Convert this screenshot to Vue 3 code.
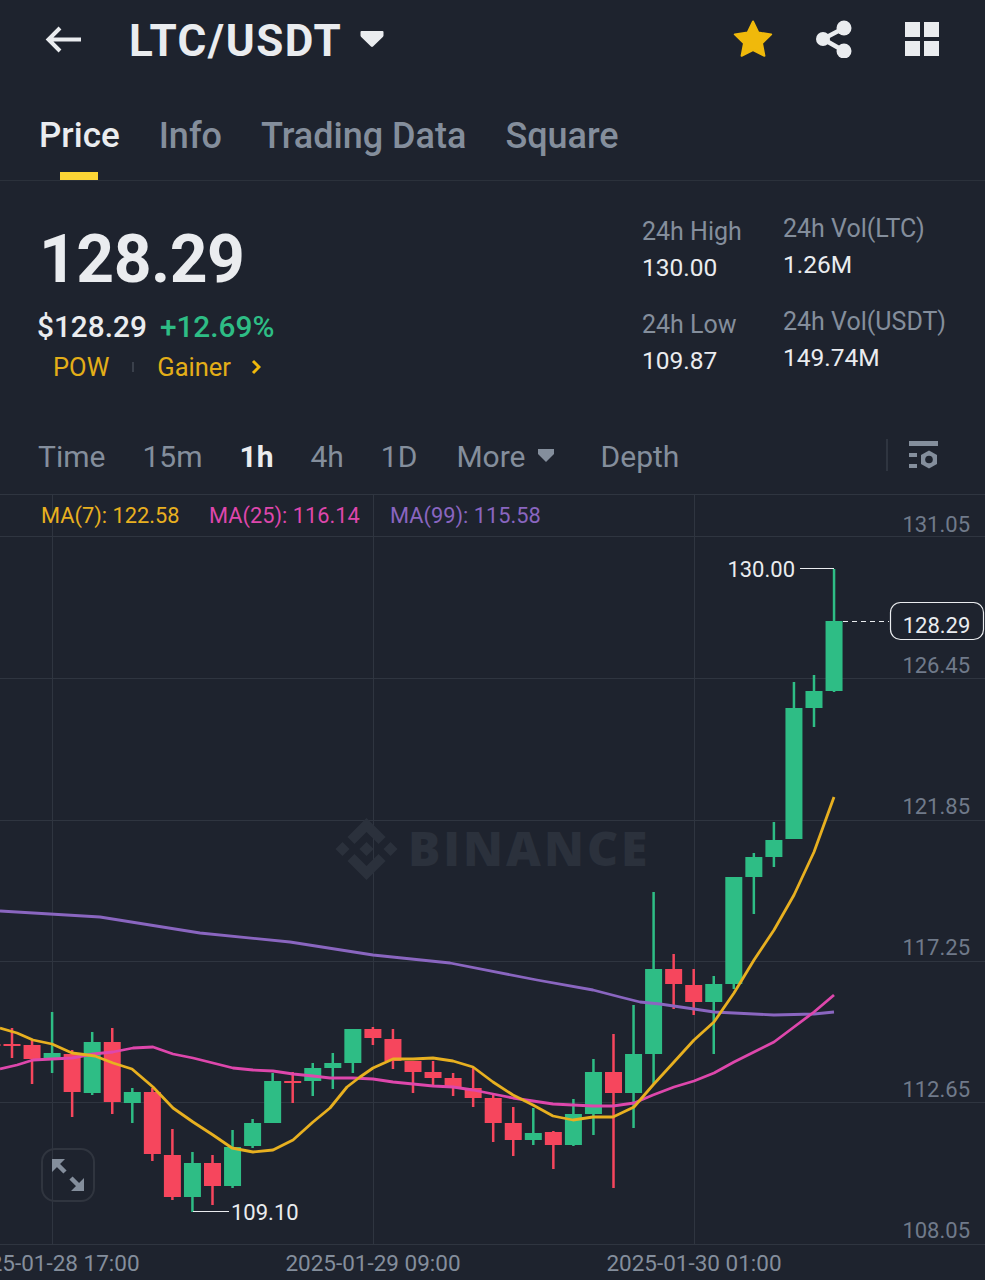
<script setup>
const tabs = [
  { label: 'Price', active: true },
  { label: 'Info' },
  { label: 'Trading Data' },
  { label: 'Square' },
]
const stats = [
  [{ k: '24h High', v: '130.00' }, { k: '24h Low', v: '109.87' }],
  [{ k: '24h Vol(LTC)', v: '1.26M' }, { k: '24h Vol(USDT)', v: '149.74M' }],
]
const intervals = [
  { label: 'Time' }, { label: '15m' }, { label: '1h', active: true }, { label: '4h' }, { label: '1D' },
]
const G = '#2EBD85'
const R = '#F6465D'
// i, bodyTop, bodyBottom, wickTop, wickBottom, colour
const raw = [
  [-1, 1044, 1046, 1044, 1046, R],
  [0, 1044, 1046, 1028, 1058, R],
  [1, 1045, 1059, 1039, 1084, R],
  [2, 1053, 1059, 1012, 1073, G],
  [3, 1054, 1092, 1050, 1117, R],
  [4, 1042, 1093, 1032, 1095, G],
  [5, 1042, 1102, 1028, 1114, R],
  [6, 1092, 1103, 1088, 1123, G],
  [7, 1092, 1154, 1088, 1161, R],
  [8, 1155, 1197, 1129, 1200, R],
  [9, 1163, 1197, 1152, 1212, G],
  [10, 1163, 1186, 1155, 1205, R],
  [11, 1147, 1186, 1130, 1188, G],
  [12, 1123, 1146, 1119, 1148, G],
  [13, 1081, 1123, 1073, 1123, G],
  [14, 1081, 1083, 1072, 1103, R],
  [15, 1068, 1081, 1063, 1096, G],
  [16, 1063, 1068, 1053, 1089, G],
  [17, 1029, 1063, 1029, 1073, G],
  [18, 1029, 1038, 1027, 1045, R],
  [19, 1039, 1061, 1029, 1069, R],
  [20, 1061, 1072, 1061, 1093, R],
  [21, 1072, 1078, 1061, 1086, R],
  [22, 1078, 1088, 1073, 1096, R],
  [23, 1088, 1098, 1068, 1107, R],
  [24, 1098, 1123, 1094, 1142, R],
  [25, 1123, 1140, 1107, 1156, R],
  [26, 1133, 1140, 1108, 1145, G],
  [27, 1132, 1145, 1131, 1169, R],
  [28, 1114, 1145, 1099, 1146, G],
  [29, 1072, 1114, 1059, 1135, G],
  [30, 1072, 1093, 1034, 1188, R],
  [31, 1054, 1093, 1005, 1128, G],
  [32, 969, 1054, 892, 1085, G],
  [33, 969, 984, 954, 1009, R],
  [34, 985, 1002, 969, 1015, R],
  [35, 984, 1002, 976, 1054, G],
  [36, 877, 984, 877, 989, G],
  [37, 857, 877, 853, 914, G],
  [38, 840, 857, 822, 867, G],
  [39, 708, 839, 682, 839, G],
  [40, 691, 708, 675, 727, G],
  [41, 621, 691, 569, 692, G],
]
const candles = raw.map(([i, top, bottom, wt, wb, color]) => ({
  x: 12 + i * 20.05, top, bottom, wt, wb, color,
}))
const ma7 = '0,1028 17,1033 33,1040 52,1044 72,1053 80,1054 95,1056 113,1063 132,1069 153,1087 173,1108 193,1122 213,1135 232,1148 253,1152 273,1150 293,1140 313,1122 330,1108 347,1087 360,1077 373,1068 393,1059 413,1059 433,1058 453,1061 473,1067 493,1082 513,1095 533,1105 553,1116 573,1120 593,1117 613,1117 634,1107 653,1085 674,1062 694,1040 714,1022 734,993 754,960 774,930 794,895 814,852 834,797'
const ma25 = '0,1069 17,1065 33,1060 52,1059 72,1058 93,1054 113,1052 133,1048 153,1047 173,1054 193,1058 213,1063 233,1068 253,1070 273,1071 293,1074 313,1076 330,1078 353,1078 373,1079 393,1082 413,1084 433,1086 453,1087 473,1090 493,1094 513,1098 533,1101 553,1104 573,1105 593,1106 613,1106 634,1103 653,1095 674,1087 694,1081 714,1073 734,1062 754,1052 774,1042 794,1027 814,1012 834,995'
const ma99 = '0,911 50,914 100,917 150,925 200,933 290,942 373,955 450,963 537,980 593,990 620,997 640,1002 660,1004 694,1009 714,1012 734,1013 774,1015 794,1014.5 814,1014 834,1012'
const hLines = [536, 678, 820, 961, 1102, 1244]
const vLines = [52, 373, 694]
const prices = [
  { t: '131.05', y: 532 }, { t: '126.45', y: 673 }, { t: '121.85', y: 814 },
  { t: '117.25', y: 955 }, { t: '112.65', y: 1097 }, { t: '108.05', y: 1238 },
]
const dates = [
  { t: '2025-01-28 17:00', x: 52 }, { t: '2025-01-29 09:00', x: 373 }, { t: '2025-01-30 01:00', x: 694 },
]
const legend = [
  { t: 'MA(7): 122.58', x: 41, c: 'l-y' },
  { t: 'MA(25): 116.14', x: 209, c: 'l-p' },
  { t: 'MA(99): 115.58', x: 390, c: 'l-v' },
]
</script>

<template>
  <div class="page">
    <header class="head">
      <svg class="back" width="38" height="30" viewBox="0 0 38 30">
        <path d="M36 14.5H4M15 3 3.5 14.5 15 26" fill="none" stroke="#EAECEF" stroke-width="4" />
      </svg>
      <h1 class="pair">LTC/USDT</h1>
      <svg class="caret" width="24" height="18" viewBox="0 0 24 18">
        <path d="M1.5 1h21a1 1 0 0 1 1 1v3.5a2 2 0 0 1-.7 1.4L13 16.6a1.5 1.5 0 0 1-2 0L1.2 6.9a2 2 0 0 1-.7-1.4V2a1 1 0 0 1 1-1z" fill="#EAECEF" />
      </svg>
      <div class="spacer"></div>
      <svg class="star" width="40" height="38" viewBox="0 0 40 38">
        <path d="M20 1.5 25.4 12.6 38.2 14.4 29 23.2 31.4 35.8 20 30 8.6 35.8 11 23.2 1.8 14.4 14.6 12.6Z" fill="#F0B90B" stroke="#F0B90B" stroke-width="2" stroke-linejoin="round" />
      </svg>
      <svg class="share" width="38" height="38" viewBox="0 0 38 38">
        <path d="M29 8 8 19 29 31" fill="none" stroke="#EAECEF" stroke-width="4.5" />
        <circle cx="29" cy="8" r="7.5" fill="#EAECEF" />
        <circle cx="8" cy="19" r="7" fill="#EAECEF" />
        <circle cx="29" cy="31" r="7.5" fill="#EAECEF" />
      </svg>
      <svg class="grid" width="34" height="34" viewBox="0 0 34 34">
        <rect x="0" y="0" width="15" height="15" fill="#EAECEF" />
        <rect x="19" y="0" width="15" height="15" fill="#EAECEF" />
        <rect x="0" y="19" width="15" height="15" fill="#EAECEF" />
        <rect x="19" y="19" width="15" height="15" fill="#EAECEF" />
      </svg>
    </header>

    <nav class="tabs">
      <div v-for="t in tabs" :key="t.label" class="tab" :class="{ on: t.active }">{{ t.label }}</div>
    </nav>

    <section class="summary">
      <div class="left">
        <div class="last">128.29</div>
        <div class="sub"><span class="usd">$128.29</span><span class="pct">+12.69%</span></div>
        <div class="tags">
          <span>POW</span><i class="sep"></i><span>Gainer</span>
          <svg class="chev" width="10" height="16" viewBox="0 0 10 16">
            <path d="M2 2l6 6-6 6" fill="none" stroke="#F0B90B" stroke-width="3" />
          </svg>
        </div>
      </div>
      <div class="stats">
        <div v-for="(col, ci) in stats" :key="ci" class="col" :class="'col' + ci">
          <div v-for="s in col" :key="s.k" class="stat">
            <div class="k">{{ s.k }}</div>
            <div class="v">{{ s.v }}</div>
          </div>
        </div>
      </div>
    </section>

    <nav class="bar">
      <div v-for="i in intervals" :key="i.label" class="iv" :class="{ on: i.active }">{{ i.label }}</div>
      <div class="iv more">
        More
        <svg width="16" height="13" viewBox="0 0 16 13">
          <path d="M0 0h16v5l-8 8-8-8z" fill="#848E9C" />
        </svg>
      </div>
      <div class="iv depth">Depth</div>
      <div class="spacer"></div>
      <i class="vsep"></i>
      <svg class="cfg" width="30" height="28" viewBox="0 0 30 28">
        <rect x="0" y="0" width="29" height="5" fill="#848E9C" />
        <rect x="0" y="12" width="8" height="4" fill="#848E9C" />
        <rect x="0" y="23" width="8" height="4" fill="#848E9C" />
        <path d="M20 10.5 28 15v9l-8 4.5-8-4.5v-9z" transform="translate(0 -1)" fill="#848E9C" />
        <circle cx="20" cy="18.5" r="3.8" fill="#1E232E" />
      </svg>
    </nav>

    <div class="chart">
      <svg class="plot" width="985" height="786" viewBox="0 494 985 786">
        <line x1="0" x2="985" y1="494.5" y2="494.5" class="gl" />
        <line v-for="y in hLines" :key="y" x1="0" x2="985" :y1="y + 0.5" :y2="y + 0.5" class="gl" />
        <line v-for="x in vLines" :key="x" :x1="x + 0.5" :x2="x + 0.5" y1="494" y2="1244" class="gl" />

        <path transform="translate(335.5 818) scale(0.49)" class="wm" d="M38.73 53.2l24.59-24.58 24.6 24.6 14.3-14.31L63.32 0 24.42 38.9l14.31 14.3zM0 63.31l14.3-14.31 14.31 14.31-14.31 14.3zM38.73 73.41l24.59 24.59 24.6-24.6 14.31 14.29-38.9 38.91-38.91-38.88v-.03l14.31-14.28zM98.01 63.31l14.3-14.31 14.3 14.3-14.3 14.32zM77.83 63.3L63.32 48.78 52.59 59.51l-1.24 1.23-2.54 2.54 14.51 14.5 14.51-14.52v-.01z" />
        <text x="408" y="866" class="wmt">BINANCE</text>

        <text v-for="l in legend" :key="l.t" :x="l.x" y="523" class="lg" :class="l.c">{{ l.t }}</text>

        <g v-for="(c, n) in candles" :key="n">
          <rect :x="c.x - 1.25" :y="c.wt" width="2.5" :height="c.wb - c.wt" :fill="c.color" />
          <rect :x="c.x - 8.5" :y="c.top" width="17" :height="c.bottom - c.top" :fill="c.color" />
        </g>

        <polyline :points="ma99" class="ln" stroke="#8A66C0" />
        <polyline :points="ma25" class="ln" stroke="#DE47AC" />
        <polyline :points="ma7" class="ln" stroke="#E8B020" />

        <path d="M800 568.5h34M193 1211.5h36" class="mk" />
        <text x="795" y="577" text-anchor="end" class="hl">130.00</text>
        <text x="231" y="1220" class="hl">109.10</text>

        <line x1="843" x2="889" y1="621.5" y2="621.5" class="dash" />
        <rect x="890.5" y="602.5" width="93" height="37" rx="10" class="tagbox" />
        <text x="936.5" y="633" text-anchor="middle" class="hl">128.29</text>

        <text v-for="p in prices" :key="p.t" x="970" :y="p.y" text-anchor="end" class="ax">{{ p.t }}</text>
        <text v-for="d in dates" :key="d.t" :x="d.x" y="1271" text-anchor="middle" class="ax dt">{{ d.t }}</text>
      </svg>
      <button class="expand">
        <svg width="34" height="34" viewBox="0 0 34 34">
          <path d="M1 1h13L1 14zM33 33H20l13-13z" fill="#848E9C" />
          <path d="M5 5l9 9M20 20l9 9" stroke="#848E9C" stroke-width="4.5" fill="none" />
        </svg>
      </button>
    </div>
  </div>
</template>

<style scoped>
.page {
  width: 985px;
  height: 1280px;
  overflow: hidden;
  background: #1E232E;
  color: #EAECEF;
  font-family: Roboto, "Liberation Sans", sans-serif;
}
.head {
  display: flex;
  align-items: center;
  height: 80px;
  padding: 0 46px 0 45px;
  box-sizing: border-box;
}
.back { margin-top: 0; }
.pair {
  margin: 3px 0 0 46px;
  font-size: 44px;
  font-weight: 700;
  line-height: 77px;
  letter-spacing: 1.5px;
}
.caret { margin: -2px 0 0 18px; }
.spacer { flex: 1; }
.star { margin-top: -3px; }
.share { margin: -3px 0 0 42px; }
.grid { margin: -3px 0 0 52px; }

.tabs {
  display: flex;
  gap: 39px;
  height: 101px;
  padding: 21px 0 0 39px;
  box-sizing: border-box;
  border-bottom: 1px solid #2B313B;
}
.tab {
  position: relative;
  font-size: 36px;
  line-height: 70px;
  color: #848E9C;
  font-weight: 500;
}
.tab.on { color: #EAECEF; font-size: 35px; }
.tab.on::after {
  content: "";
  position: absolute;
  left: 21px;
  bottom: 0;
  width: 38px;
  height: 8px;
  background: #FCD535;
}

.summary {
  display: flex;
  justify-content: space-between;
  height: 250px;
  box-sizing: border-box;
}
.left { padding: 38px 0 0 37px; }
.last {
  font-size: 66px;
  line-height: 80px;
  font-weight: 700;
  margin: 1px 0 0 2px;
  letter-spacing: -0.5px;
}
.sub {
  display: flex;
  gap: 13px;
  margin-top: 9px;
  font-size: 29.8px;
  line-height: 36px;
  font-weight: 500;
}
.pct { color: #2EBD85; }
.tags {
  display: flex;
  align-items: center;
  margin: 5px 0 0 16px;
  font-size: 25.5px;
  line-height: 34px;
  color: #E3AE18;
}
.sep {
  width: 2px;
  height: 10px;
  margin: 0 23px;
  background: #3A404B;
}
.chev { margin-left: 20px; }

.stats {
  display: flex;
  gap: 41px;
  padding-right: 39px;
}
.col0 { width: 100px; padding-top: 33px; }
.col1 { width: 163px; padding-top: 30px; }
.stat { height: 93px; white-space: nowrap; }
.k {
  font-size: 25px;
  line-height: 36px;
  color: #848E9C;
}
.v {
  font-size: 24.5px;
  line-height: 36px;
  color: #EAECEF;
}

.bar {
  display: flex;
  align-items: center;
  gap: 37px;
  height: 63px;
  padding: 0 46px 12px 38px;
  box-sizing: border-box;
}
.iv {
  font-size: 30px;
  line-height: 52px;
  color: #848E9C;
}
.iv.on { color: #EAECEF; font-weight: 700; }
.more { display: flex; gap: 12px; margin-left: 2px; }
.more svg { margin-top: 18px; }
.depth { margin-left: 10px; }
.vsep {
  width: 2px;
  height: 32px;
  margin: -4px -16px 0 0;
  background: #2F3540;
}
.cfg { display: block; margin-top: -4px; }

.chart {
  position: relative;
  height: 786px;
}
.plot { display: block; }
.gl { stroke: #2F3540; stroke-width: 1; }
.wm { fill: #2B313C; }
.wmt {
  font-family: "Open Sans", Roboto, sans-serif;
  font-weight: 800;
  font-size: 48px;
  letter-spacing: 3px;
  fill: #2B313C;
}
.lg { font-size: 21.8px; }
.l-y { fill: #E8B020; }
.l-p { fill: #DE47AC; }
.l-v { fill: #8A66C0; }
.ln {
  fill: none;
  stroke-width: 2.8;
  stroke-linejoin: round;
}
.mk { fill: none; stroke: #EAECEF; stroke-width: 1.2; }
.hl { font-size: 22px; fill: #EAECEF; }
.dash { stroke: #EAECEF; stroke-width: 1.2; stroke-dasharray: 5 4; }
.tagbox { fill: #1E232E; stroke: #EAECEF; stroke-width: 1.2; }
.ax { font-size: 22px; fill: #707A8A; }
.dt { font-size: 22.5px; fill: #848E9C; }
.expand {
  position: absolute;
  left: 41px;
  top: 654px;
  width: 54px;
  height: 54px;
  padding: 0;
  box-sizing: border-box;
  display: flex;
  align-items: center;
  justify-content: center;
  background: transparent;
  border: 2.5px solid #30353F;
  border-radius: 14px;
}
</style>

<style>
html, body { background: #1E232E; }
</style>
